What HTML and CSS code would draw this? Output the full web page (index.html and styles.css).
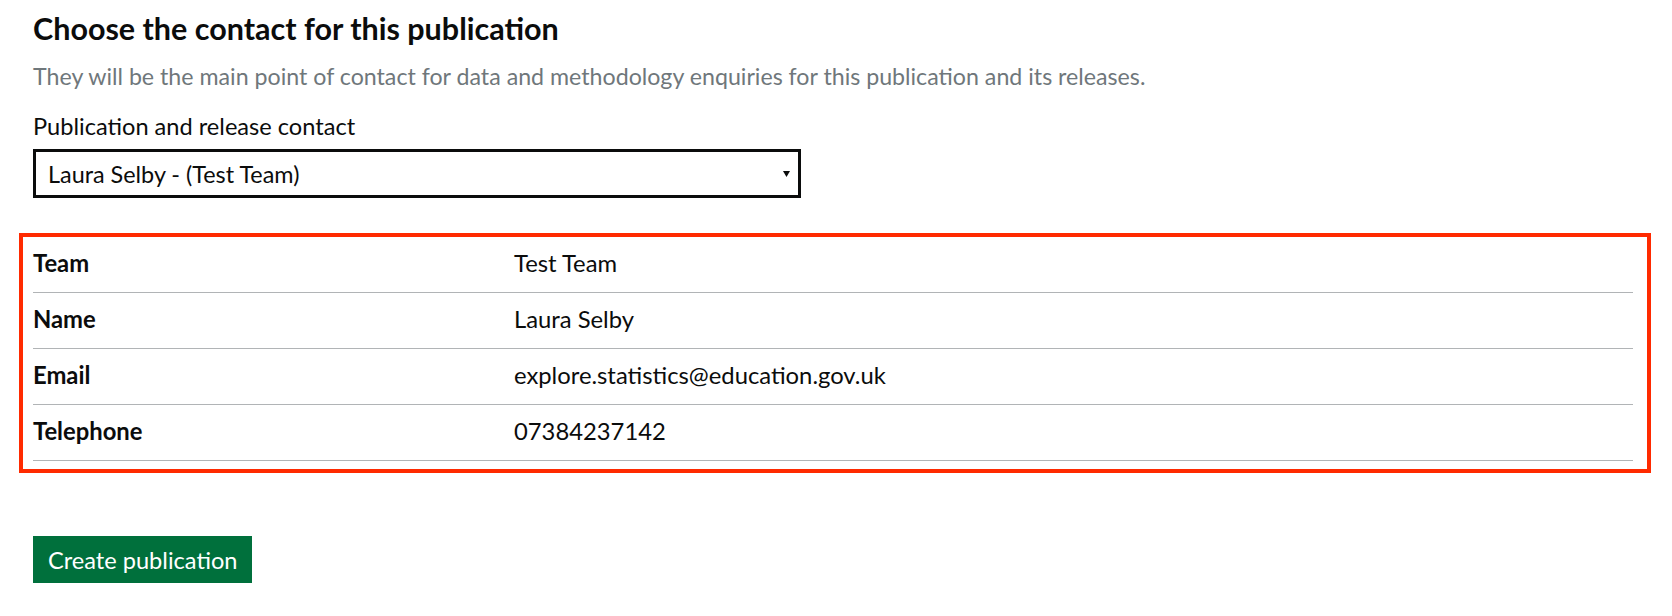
FILE: index.html
```html
<!DOCTYPE html>
<html lang="en">
<head>
<meta charset="utf-8">
<title>Choose the contact for this publication</title>
<link rel="stylesheet" href="styles.css">
</head>
<body>
<main class="page">
  <h2 class="heading">Choose the contact for this publication</h2>
  <p class="hint">They will be the main point of contact for data and methodology enquiries for this publication and its releases.</p>
  <label class="label" for="contact">Publication and release contact</label>
  <div class="select-wrap">
    <select class="select" id="contact">
      <option>Laura Selby - (Test Team)</option>
    </select>
    <svg class="select-arrow" width="7" height="6" viewBox="0 0 7 6" aria-hidden="true"><path d="M0 0H7L3.5 6Z" fill="#0b0c0c"/></svg>
  </div>
  <section class="highlight">
    <dl class="summary">
      <div class="row"><dt class="key">Team</dt><dd class="value">Test Team</dd></div>
      <div class="row"><dt class="key">Name</dt><dd class="value">Laura Selby</dd></div>
      <div class="row"><dt class="key">Email</dt><dd class="value">explore.statistics@education.gov.uk</dd></div>
      <div class="row"><dt class="key">Telephone</dt><dd class="value">07384237142</dd></div>
    </dl>
  </section>
  <button class="button" type="button">Create publication</button>
</main>
</body>
</html>
```
FILE: styles.css
```css
* { box-sizing: border-box; }
html, body { margin: 0; padding: 0; background: #ffffff; }
body {
  font-family: Lato, "Noto Sans", Arial, sans-serif;
  color: #0b0c0c;
}
.page {
  padding: 10px 21px 0 19px;
  display: flex;
  flex-direction: column;
  align-items: flex-start;
}
.heading {
  margin: 0 0 0 14px;
  font-size: 30.5px;
  line-height: 36px;
  font-weight: 700;
}
.hint {
  margin: 15px 0 0 14px;
  font-size: 23.2px;
  line-height: 30px;
  color: #6f777b;
}
.label {
  margin: 20px 0 0 14px;
  font-size: 23.6px;
  line-height: 30px;
}
.select-wrap {
  position: relative;
  margin: 8px 0 0 14px;
  width: 768px;
}
.select {
  display: block;
  width: 100%;
  height: 49px;
  border: 3px solid #0b0c0c;
  border-radius: 0;
  padding: 0 30px 0 12px;
  font-family: inherit;
  font-size: 23.4px;
  color: #0b0c0c;
  background: #ffffff;
  -webkit-appearance: none;
  appearance: none;
}
.select-arrow {
  position: absolute;
  right: 11px;
  top: 22px;
}
.highlight {
  align-self: stretch;
  margin-top: 35px;
  border: 4px solid #ff2a00;
  padding: 0 14px 8px 10px;
}
.summary {
  margin: 0;
}
.row {
  display: grid;
  grid-template-columns: 481px 1fr;
  border-bottom: 1px solid #b1b4b6;
  padding: 11px 0 14px;
}
.key, .value {
  margin: 0;
  font-size: 23.8px;
  line-height: 30px;
}
.key { font-weight: 700; }
.button {
  margin: 63px 0 0 14px;
  border: 0;
  border-radius: 0;
  background: #00703c;
  box-shadow: 0 2px 0 #002d18;
  color: #ffffff;
  font-family: inherit;
  font-size: 23.6px;
  line-height: 30px;
  padding: 9px 15px 8px;
  cursor: pointer;
}
```
